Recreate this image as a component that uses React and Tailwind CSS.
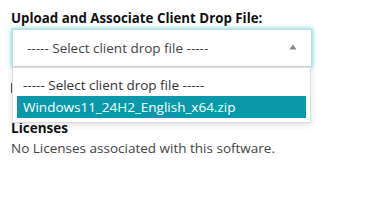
import { useState } from "react";

const options = ["----- Select client drop file -----", "Windows11_24H2_English_x64.zip"];

function App() {
  const [selected] = useState(1);

  return (
    <div className="w-[365px] h-[207px] bg-white px-[11px] pt-[10px] text-[#333] font-['Open_Sans',sans-serif]">
      <div className="text-[13.3px] font-bold text-[#111] leading-[16px]">
        Upload and Associate Client Drop File:
      </div>

      <div className="relative mt-[3px] w-[301px]">
        {/* select box */}
        <div className="ml-[1px] h-[38px] flex items-center justify-between border border-[#cfd6d8] bg-white pl-[14px] pr-[14px] shadow-[0_0_4px_1px_rgba(102,214,224,0.85)]">
          <span className="text-[13.5px] text-[#444]">----- Select client drop file -----</span>
          <svg width="8" height="6" viewBox="0 0 8 6" className="mt-[-3px]">
            <path d="M4 0.5 L7.5 5.5 L0.5 5.5 Z" fill="#888" />
          </svg>
        </div>

        {/* open list */}
        <div className="absolute left-[1px] top-[38px] w-[299px] bg-white border border-[#ddd] shadow-[0_2px_6px_rgba(0,0,0,0.12)] px-[4px] pt-[6px] pb-[4px] z-10">
          {options.map((opt, i) => (
            <div
              key={i}
              className={`h-[22px] flex items-center px-[6px] text-[13.5px] ${
                i === selected ? "bg-[#0c98a8] text-white" : "text-[#333]"
              }`}
            >
              {opt}
            </div>
          ))}
        </div>
      </div>

      {/* row covered by the list */}
      <div className="h-[53px] pt-[16px]">
        <div className="w-[2px] h-[10px] bg-[#555]"></div>
      </div>

      <div className="text-[13.5px] font-bold text-[#111] leading-[16px]">Licenses</div>
      <div className="mt-[4px] text-[13.5px] text-[#444] leading-[16px]">
        No Licenses associated with this software.
      </div>
    </div>
  );
}

export default App;
